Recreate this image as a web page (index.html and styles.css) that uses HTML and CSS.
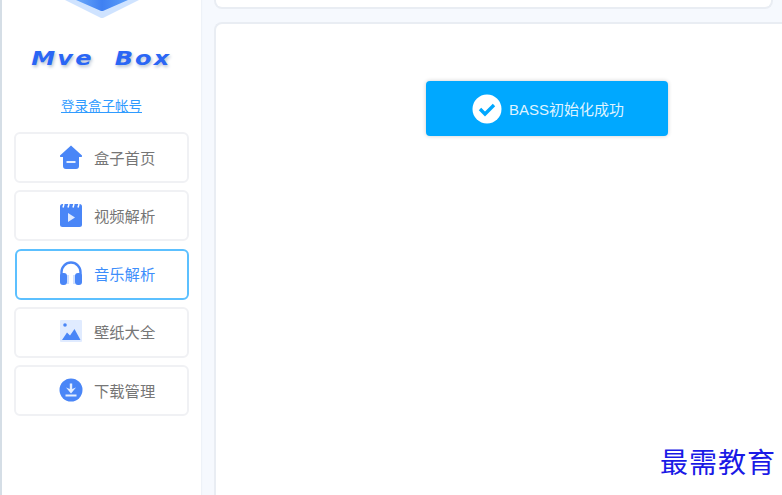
FILE: index.html
```html
<!DOCTYPE html>
<html lang="zh-CN">
<head>
    <meta charset="UTF-8">
    <meta name="viewport" content="width=device-width, initial-scale=1.0">
    <title>Mve Box</title>
    <link rel="stylesheet" href="styles.css">
</head>
<body>
    <aside class="sidebar">
        <svg class="logo-mark" width="90" height="19" viewBox="0 0 90 19">
            <defs>
                <linearGradient id="logoFill" x1="0" y1="0" x2="1" y2="0">
                    <stop offset="0" stop-color="#6aa8fa"/>
                    <stop offset="0.5" stop-color="#3f80f2"/>
                    <stop offset="1" stop-color="#5c9ef8"/>
                </linearGradient>
            </defs>
            <path d="M8 0 L43 17.500 Q45 18.500 47 17.500 L82 0 Z" fill="#cfe3ff"/>
            <path d="M19 0 L43 10.500 Q45 11.500 47 10.500 L71 0 Z" fill="url(#logoFill)"/>
        </svg>
        <div class="brand">Mve&nbsp;&nbsp;Box</div>
        <a class="login-link" href="#">登录盒子帐号</a>
        <nav class="menu">
            <a class="menu-item" href="#">
                <svg class="menu-icon" width="24" height="24" viewBox="0 0 24 24">
                    <path d="M12 0.500 L23 10.500 Q23.500 12 22 12 L20 12 L20 21 Q20 24 17 24 L7 24 Q4 24 4 21 L4 12 L2 12 Q.5 12 1 10.500 Z" fill="#4a86f7"/>
                    <rect x="7.500" y="16" width="9" height="2" fill="#e4eeff"/>
                </svg>
                <span>盒子首页</span>
            </a>
            <a class="menu-item" href="#">
                <svg class="menu-icon" width="24" height="24" viewBox="0 0 24 24">
                    <rect x="1" y="1" width="22" height="23" rx="2.500" fill="#4a86f7"/>
                    <path d="M5 1 L4 4.500 M10 1 L9 4.500 M15 1 L14 4.500 M20 1 L19 4.500" stroke="#fff" stroke-width="1.500"/>
                    <path d="M9 10 L16 14.500 L9 19 Z" fill="#dfeaff"/>
                </svg>
                <span>视频解析</span>
            </a>
            <a class="menu-item active" href="#">
                <svg class="menu-icon" width="24" height="24" viewBox="0 0 24 24">
                    <path d="M2.500 15 L2.500 11 A9.500 9.500 0 0 1 21.500 11 L21.500 15" fill="none" stroke="#4a86f7" stroke-width="2.400"/>
                    <rect x="1" y="12" width="7" height="12" rx="3" fill="#4a86f7"/>
                    <rect x="16" y="12" width="7" height="12" rx="3" fill="#4a86f7"/>
                    <rect x="8" y="14" width="2" height="9" fill="#cfe0ff"/>
                    <rect x="14" y="14" width="2" height="9" fill="#cfe0ff"/>
                </svg>
                <span>音乐解析</span>
            </a>
            <a class="menu-item" href="#">
                <svg class="menu-icon" width="24" height="24" viewBox="0 0 24 24">
                    <rect x="1" y="1" width="22" height="22" rx="1" fill="#e0ebff"/>
                    <circle cx="6" cy="6" r="1.800" fill="#4a86f7"/>
                    <path d="M3 21 L8 13.500 L11 16.500 L15.500 10 L21.500 21 Z" fill="#4a86f7"/>
                </svg>
                <span>壁纸大全</span>
            </a>
            <a class="menu-item" href="#">
                <svg class="menu-icon" width="24" height="24" viewBox="0 0 24 24">
                    <circle cx="12" cy="12" r="11.500" fill="#4a86f7"/>
                    <path d="M10.800 5.500 L13.200 5.500 L13.200 11 L17 9.500 L12 15.500 L7 9.500 L10.800 11 Z" fill="#e4eeff"/>
                    <rect x="6.500" y="16.500" width="11" height="2" fill="#e4eeff"/>
                </svg>
                <span>下载管理</span>
            </a>
        </nav>
    </aside>
    <main class="content">
        <div class="top-card"></div>
        <section class="main-card">
            <div class="toast">
                <svg width="30" height="30" viewBox="0 0 30 30">
                    <circle cx="15" cy="15" r="14.500" fill="#fff"/>
                    <path d="M8 15 L13 20 L22 11" fill="none" stroke="#00a8ff" stroke-width="3.400"/>
                </svg>
                <span>BASS初始化成功</span>
            </div>
        </section>
    </main>
    <div class="watermark">最需教育</div>
</body>
</html>
```

FILE: styles.css
```css
* {
    box-sizing: border-box;
}

html, body {
    height: 100%;
}

body {
    margin: 0;
    display: flex;
    height: 495px;
    overflow: hidden;
    background-color: #f6f9fe;
    font-family: "Liberation Sans", "Noto Sans CJK SC", sans-serif;
    border-left: 2px solid #d5dee6;
}

.sidebar {
    width: 199px;
    flex-shrink: 0;
    background-color: #fff;
    display: flex;
    flex-direction: column;
    align-items: center;
    box-shadow: 1px 0 1px #eef2f8;
}

.logo-mark {
    display: block;
}

.brand {
    margin-top: 27px;
    height: 24px;
    font-family: "DejaVu Sans", sans-serif;
    font-size: 20px;
    line-height: 24px;
    font-weight: bold;
    font-style: italic;
    letter-spacing: 1.800px;
    white-space: nowrap;
    color: #2a66f5;
    text-shadow: 1px 2px 3px #b4c0d2;
    transform: scaleX(1.2);
}

.login-link {
    margin-top: 28px;
    font-size: 13.500px;
    line-height: 18px;
    color: #2f9bff;
}

.menu {
    margin-top: 16px;
    width: 175px;
    display: flex;
    flex-direction: column;
    gap: 7.250px;
}

.menu-item {
    height: 51px;
    padding-left: 43px;
    padding-bottom: 2px;
    display: flex;
    align-items: center;
    gap: 11px;
    background-color: #fff;
    border: 2px solid #f0f1f4;
    border-radius: 6px;
    color: #767676;
    font-size: 15.300px;
    text-decoration: none;
}

.menu-item.active {
    margin: 0 0 0 1px;
    padding-left: 42px;
    border: 2px solid #5cc0ff;
    color: #3d8efb;
}

.menu-icon {
    flex-shrink: 0;
}

.content {
    flex: 1;
    padding-left: 13px;
    display: flex;
    flex-direction: column;
    gap: 13px;
}

.top-card {
    height: 9px;
    width: 559px;
    background-color: #fff;
    border: 2px solid #e9edf3;
    border-top: none;
    border-radius: 0 0 8px 8px;
}

.main-card {
    flex: 1;
    background-color: #fff;
    border: 2px solid #e9edf3;
    border-right: none;
    border-bottom: none;
    border-radius: 8px 0 0 0;
    padding: 57px 0 0 210px;
}

.toast {
    width: 242px;
    height: 55px;
    display: flex;
    align-items: center;
    gap: 7px;
    padding-left: 46px;
    background-color: #00a8ff;
    border-radius: 4px;
    box-shadow: 0 0 4px rgba(0, 0, 0, 0.2);
    color: #dff3ff;
    font-size: 15px;
}

.watermark {
    position: absolute;
    left: 660px;
    top: 448px;
    font-size: 28px;
    line-height: 32px;
    letter-spacing: 1px;
    color: #1a1ae6;
}
```
